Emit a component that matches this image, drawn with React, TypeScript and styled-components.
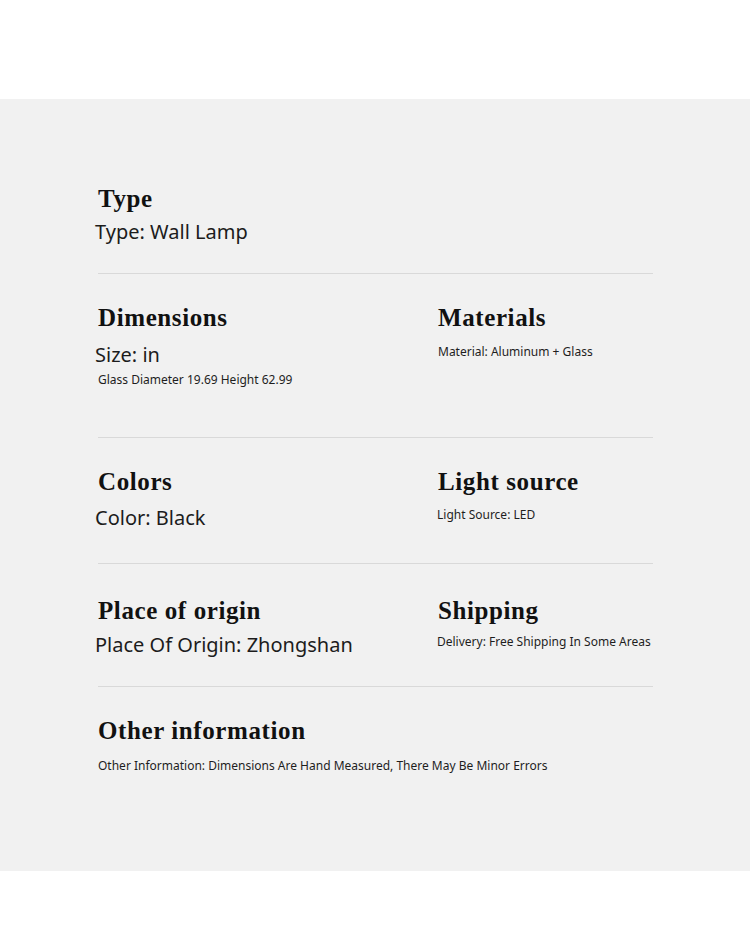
import React from "react";
import styled, { createGlobalStyle } from "styled-components";

const Global = createGlobalStyle`
  html, body { margin: 0; padding: 0; background: #ffffff; }
  body { font-family: "Noto Sans", "Open Sans", sans-serif; }
`;

const Page = styled.div`
  padding-top: 99px;
  background: #ffffff;
`;

const Panel = styled.section`
  background: #f1f1f1;
  padding: 85px 97px 96px 98px;
  display: flex;
  flex-direction: column;
`;

const Row = styled.div<{ $pt: number; $pb: number; $last?: boolean }>`
  display: grid;
  grid-template-columns: 340px 1fr;
  padding-top: ${(p) => p.$pt}px;
  padding-bottom: ${(p) => p.$pb}px;
  border-bottom: ${(p) => (p.$last ? "none" : "1px solid #d9d9d9")};
`;

const Cell = styled.div`
  display: flex;
  flex-direction: column;
`;

const Heading = styled.h3<{ $mb: number }>`
  margin: 0 0 ${(p) => p.$mb}px 0;
  font-family: "Liberation Serif", "DejaVu Serif", serif;
  font-weight: 700;
  font-size: 25px;
  line-height: 30px;
  color: #111111;
  letter-spacing: 0.6px;
`;

const Value = styled.div`
  margin-left: -3px;
  font-family: "Noto Sans", sans-serif;
  font-size: 20px;
  line-height: 26px;
  color: #1c1c1c;
`;

const Small = styled.div<{ $dx?: number; $mt?: number }>`
  margin-left: ${(p) => p.$dx ?? 0}px;
  margin-top: ${(p) => p.$mt ?? 0}px;
  font-family: "Noto Sans", sans-serif;
  font-size: 12px;
  line-height: 18px;
  color: #1e1e1e;
  white-space: nowrap;
`;

export default function App() {
  return (
    <Page>
      <Global />
      <Panel>
        <Row $pt={0} $pb={28}>
          <Cell>
            <Heading $mb={5}>Type</Heading>
            <Value>Type: Wall Lamp</Value>
          </Cell>
        </Row>
        <Row $pt={29} $pb={48}>
          <Cell>
            <Heading $mb={9}>Dimensions</Heading>
            <Value>Size: in</Value>
            <Small $mt={3}>Glass Diameter 19.69 Height 62.99</Small>
          </Cell>
          <Cell>
            <Heading $mb={9}>Materials</Heading>
            <Small $mt={1}>Material: Aluminum + Glass</Small>
          </Cell>
        </Row>
        <Row $pt={29} $pb={32}>
          <Cell>
            <Heading $mb={8}>Colors</Heading>
            <Value>Color: Black</Value>
          </Cell>
          <Cell>
            <Heading $mb={8}>Light source</Heading>
            <Small $dx={-1} $mt={1}>Light Source: LED</Small>
          </Cell>
        </Row>
        <Row $pt={32} $pb={28}>
          <Cell>
            <Heading $mb={6}>Place of origin</Heading>
            <Value>Place Of Origin: Zhongshan</Value>
          </Cell>
          <Cell>
            <Heading $mb={6}>Shipping</Heading>
            <Small $dx={-1} $mt={1}>
              Delivery: Free Shipping In Some Areas
            </Small>
          </Cell>
        </Row>
        <Row $pt={29} $pb={0} $last>
          <Cell>
            <Heading $mb={10}>Other information</Heading>
            <Small $mt={1}>
              Other Information: Dimensions Are Hand Measured, There May Be Minor Errors
            </Small>
          </Cell>
        </Row>
      </Panel>
    </Page>
  );
}
